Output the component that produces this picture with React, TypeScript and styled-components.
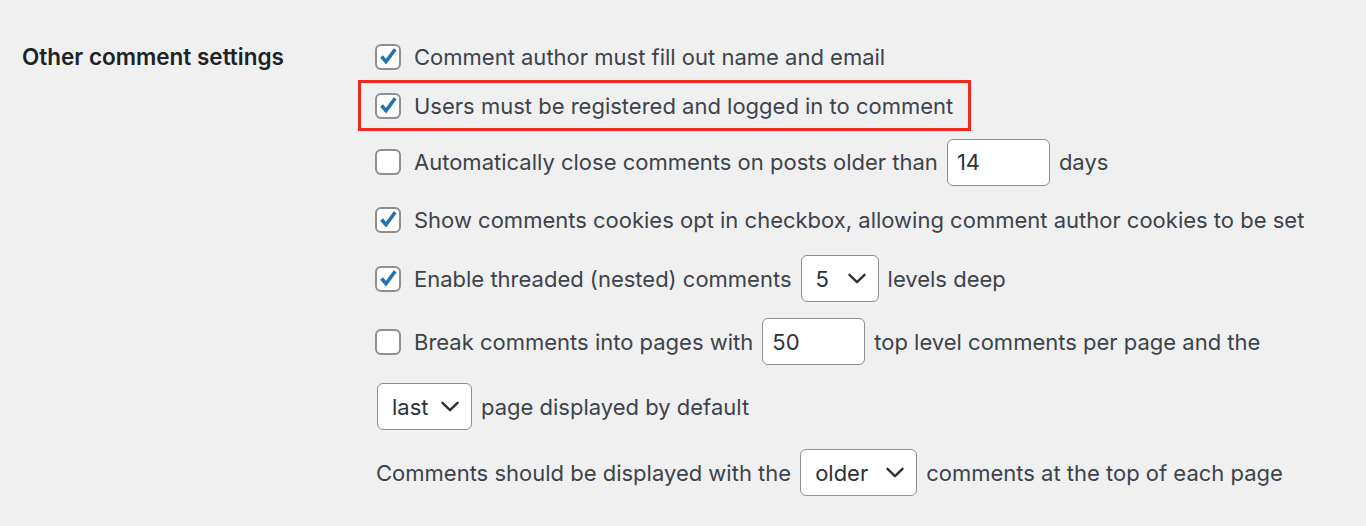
import React from 'react';
import styled, { createGlobalStyle } from 'styled-components';

const GlobalStyle = createGlobalStyle`
  html, body {
    margin: 0;
    padding: 0;
    background: #f0f0f1;
  }
  body {
    font-family: Inter, "Noto Sans", "Liberation Sans", sans-serif;
    -webkit-font-smoothing: antialiased;
  }
`;

const Page = styled.div`
  width: 1366px;
  height: 526px;
  box-sizing: border-box;
  padding: 32px 0 0 22px;
  display: grid;
  grid-template-columns: 354px 1fr;
  align-items: start;
`;

const Heading = styled.div`
  height: 48px;
  display: flex;
  align-items: center;
  font-size: 22.5px;
  font-weight: 600;
  color: #1d2327;
  box-sizing: border-box;
`;

const Fields = styled.div`
  display: flex;
  flex-direction: column;
`;

const Row = styled.div<{ h: number }>`
  height: ${(p) => p.h}px;
  display: flex;
  align-items: center;
  font-size: 22px;
  color: #3c434a;
  white-space: nowrap;
  padding-top: 1px;
  box-sizing: border-box;
`;

const Highlight = styled.div`
  align-self: flex-start;
  height: 51px;
  box-sizing: border-box;
  margin-left: -18px;
  padding: 1px 15px 0;
  border: 3px solid #ef2a1c;
  display: flex;
  align-items: center;
  font-size: 22px;
  color: #3c434a;
  white-space: nowrap;
`;

const Box = styled.span`
  flex: none;
  width: 26px;
  height: 26px;
  box-sizing: border-box;
  border: 2px solid #8c8f94;
  border-radius: 6px;
  background: #fff;
  margin: 0 13px 0 -1px;
  display: flex;

  svg {
    margin: -2px;
  }
`;

const TextInput = styled.div<{ w: number }>`
  width: ${(p) => p.w}px;
  height: 47px;
  box-sizing: border-box;
  border: 1.5px solid #8c8f94;
  border-radius: 6px;
  background: #fff;
  margin: 0 9px;
  padding-left: 9px;
  display: flex;
  align-items: center;
  color: #2c3338;
`;

const SelectBox = styled.div<{ w: number; first?: boolean }>`
  width: ${(p) => p.w}px;
  height: 47px;
  box-sizing: border-box;
  border: 1.5px solid #8c8f94;
  border-radius: 6px;
  background: #fff;
  margin: 0 9px 0 ${(p) => (p.first ? 1 : 9)}px;
  padding: 0 12px 0 14px;
  display: flex;
  align-items: center;
  justify-content: space-between;
  color: #2c3338;
`;

const Check = ({ checked }: { checked?: boolean }) => (
  <Box>
    {checked && (
      <svg width="26" height="26" viewBox="0 0 26 26">
        <path d="M6.5 12.5l4.5 5.2 9.2-12.4" fill="none" stroke="#2271b1" strokeWidth="3.6" />
      </svg>
    )}
  </Box>
);

const Chevron = () => (
  <svg width="18" height="11" viewBox="0 0 18 11">
    <path d="M1.5 1.8l7.5 7.4 7.5-7.4" fill="none" stroke="#2c3338" strokeWidth="2.4" strokeLinecap="round" strokeLinejoin="round" />
  </svg>
);

const Select = ({ value, w, first }: { value: string; w: number; first?: boolean }) => (
  <SelectBox w={w} first={first}>
    <span>{value}</span>
    <Chevron />
  </SelectBox>
);

export default function App() {
  return (
    <>
      <GlobalStyle />
      <Page>
        <Heading>Other comment settings</Heading>
        <Fields>
          <Row h={48}>
            <Check checked />
            Comment author must fill out name and email
          </Row>
          <Highlight>
            <Check checked />
            Users must be registered and logged in to comment
          </Highlight>
          <Row h={61}>
            <Check />
            Automatically close comments on posts older than
            <TextInput w={103}>14</TextInput>
            days
          </Row>
          <Row h={54}>
            <Check checked />
            Show comments cookies opt in checkbox, allowing comment author cookies to be set
          </Row>
          <Row h={64}>
            <Check checked />
            Enable threaded (nested) comments
            <Select value="5" w={78} />
            levels deep
          </Row>
          <Row h={62}>
            <Check />
            Break comments into pages with
            <TextInput w={103}>50</TextInput>
            top level comments per page and the
          </Row>
          <Row h={68}>
            <Select value="last" w={95} first />
            page displayed by default
          </Row>
          <Row h={64}>
            Comments should be displayed with the
            <Select value="older" w={117} />
            comments at the top of each page
          </Row>
        </Fields>
      </Page>
    </>
  );
}
